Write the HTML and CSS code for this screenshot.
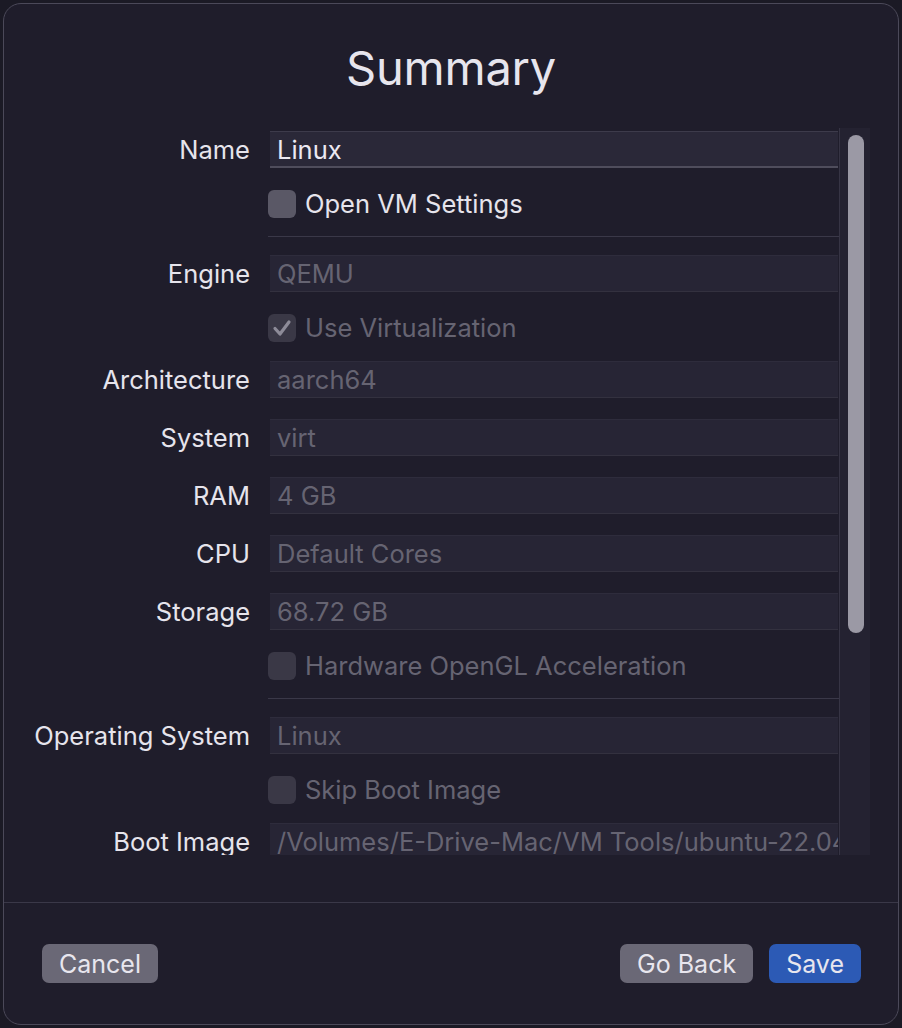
FILE: index.html
```html
<!DOCTYPE html>
<html lang="en">
<head>
<meta charset="utf-8">
<title>Summary</title>
<link rel="stylesheet" href="styles.css">
</head>
<body>
<div class="window">
  <h1 class="title">Summary</h1>
  <div class="scroll">
    <div class="form">
      <div class="label">Name</div>
      <div class="field editable">Linux</div>

      <div class="check-row gap-22">
        <span class="box"></span><span class="check-text">Open VM Settings</span>
      </div>
      <div class="sep"></div>

      <div class="label gap-18">Engine</div>
      <div class="field gap-18">QEMU</div>

      <div class="check-row gap-22 disabled">
        <span class="box checked"><svg viewBox="0 0 28 28" width="28" height="28"><path d="M7 14.5 L12 20 L21 8" fill="none" stroke="#8d8b98" stroke-width="3.2" stroke-linecap="round" stroke-linejoin="round"/></svg></span><span class="check-text">Use Virtualization</span>
      </div>

      <div class="label gap-19">Architecture</div>
      <div class="field gap-19">aarch64</div>

      <div class="label gap-21">System</div>
      <div class="field gap-21">virt</div>

      <div class="label gap-21">RAM</div>
      <div class="field gap-21">4 GB</div>

      <div class="label gap-21">CPU</div>
      <div class="field gap-21">Default Cores</div>

      <div class="label gap-21">Storage</div>
      <div class="field gap-21">68.72 GB</div>

      <div class="check-row gap-22 disabled">
        <span class="box"></span><span class="check-text">Hardware OpenGL Acceleration</span>
      </div>
      <div class="sep"></div>

      <div class="label gap-18">Operating System</div>
      <div class="field gap-18">Linux</div>

      <div class="check-row gap-22 disabled">
        <span class="box"></span><span class="check-text">Skip Boot Image</span>
      </div>

      <div class="label gap-19">Boot Image</div>
      <div class="field gap-19">/Volumes/E-Drive-Mac/VM Tools/ubuntu-22.04-live-server-arm64.iso</div>
    </div>
    <div class="track"><div class="thumb"></div></div>
  </div>
  <div class="footer">
    <button class="btn">Cancel</button>
    <div class="spacer"></div>
    <button class="btn">Go Back</button>
    <button class="btn primary">Save</button>
  </div>
</div>
</body>
</html>
```
FILE: styles.css
```css
* { box-sizing: border-box; }
html, body { margin: 0; padding: 0; }
body {
  background: #1b1a25;
  font-family: "Inter", "Liberation Sans", sans-serif;
  width: 902px;
  height: 1028px;
  overflow: hidden;
}
.window {
  margin: 3px;
  height: 1022px;
  border: 1px solid #4b4959;
  border-radius: 18px;
  background: #1f1d2b;
  display: flex;
  flex-direction: column;
}
.title {
  margin: 36px 0 32px;
  height: 56px;
  line-height: 56px;
  text-align: center;
  font-size: 47px;
  font-weight: 400;
  color: #e7e5ed;
  letter-spacing: -0.2px;
}
.scroll {
  display: flex;
  height: 727px;
  margin-right: 28px;
}
.form {
  flex: 1;
  display: grid;
  grid-template-columns: 246px 1fr;
  column-gap: 18px;
  align-content: start;
  padding-top: 3px;
  overflow: hidden;
}
.label {
  grid-column: 1;
  height: 37px;
  line-height: 38px;
  text-align: right;
  font-size: 25.5px;
  color: #e6e4ec;
  white-space: nowrap;
}
.field {
  grid-column: 2;
  height: 37px;
  line-height: 36px;
  margin-left: 2px;
  margin-right: 1px;
  padding-left: 7px;
  background: #272535;
  border-top: 1px solid #2e2c3c;
  border-bottom: 1px solid #33313f;
  font-size: 25.5px;
  color: #666472;
  white-space: nowrap;
  overflow: hidden;
}
.field.editable {
  background: #2a2838;
  border-top: 1px solid #3d3b4b;
  border-bottom: 2px solid #4f4d5c;
  color: #ece9f2;
}
.check-row {
  grid-column: 2;
  height: 28px;
  display: flex;
  align-items: center;
  gap: 9px;
  font-size: 25.5px;
  color: #e6e4ec;
}
.check-row.disabled { color: #666472; }
.box {
  width: 28px;
  height: 28px;
  border-radius: 6px;
  background: #5a5866;
  flex: none;
  display: block;
}
.check-row.disabled .box { background: #3a3846; }
.box svg { display: block; }
.check-text { line-height: 28px; white-space: nowrap; }
.sep {
  grid-column: 2;
  height: 1px;
  margin-top: 18px;
  background: #3a3848;
}
.gap-18 { margin-top: 18px; }
.gap-19 { margin-top: 19px; }
.gap-21 { margin-top: 21px; }
.gap-22 { margin-top: 22px; }
.track {
  width: 31px;
  flex: none;
  background: #242231;
  border-left: 1px solid #363444;
  padding: 7px 6px 0 8px;
}
.thumb {
  width: 16px;
  height: 498px;
  border-radius: 8px;
  background: #9b99a5;
}
.footer {
  margin-top: 47px;
  border-top: 1px solid #3a3848;
  padding: 41px 37px 0 38px;
  display: flex;
  gap: 16px;
}
.spacer { flex: 1; }
.btn {
  height: 39px;
  border: none;
  border-radius: 7px;
  background: #6a6876;
  color: #e8e6ee;
  font-family: "Inter", "Liberation Sans", sans-serif;
  font-size: 25px;
  padding: 0 17px;
  line-height: 38px;
}
.btn.primary {
  background: #2c5ab5;
}
```
